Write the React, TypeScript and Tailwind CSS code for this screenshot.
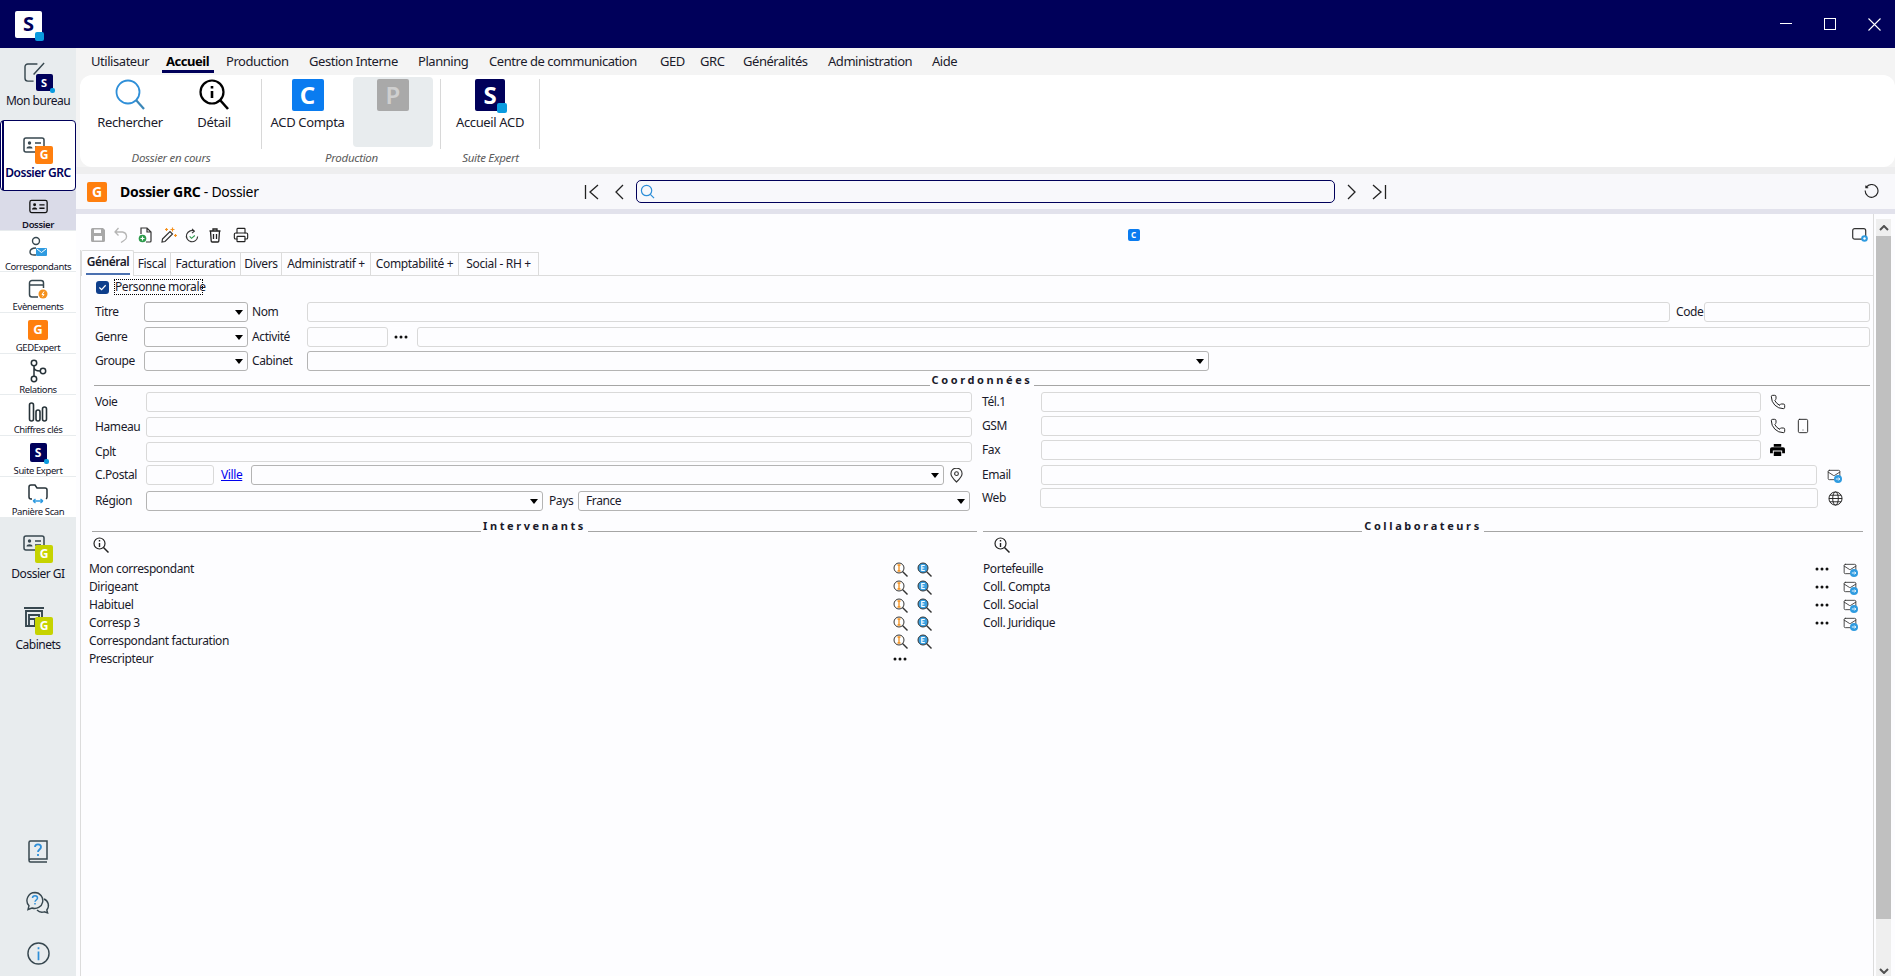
import { Mail, Phone, Printer, Smartphone } from 'lucide-react';
import type { ReactNode } from 'react';

const menuItems = [
  { label: 'Utilisateur', cls: 'w-[75px]' },
  { label: 'Accueil', cls: 'w-[60px] font-bold text-black', active: true },
  { label: 'Production', cls: 'w-[83px]' },
  { label: 'Gestion Interne', cls: 'w-[109px]' },
  { label: 'Planning', cls: 'w-[71px]' },
  { label: 'Centre de communication', cls: 'w-[171px]' },
  { label: 'GED', cls: 'w-[40px]' },
  { label: 'GRC', cls: 'w-[43px]' },
  { label: 'Généralités', cls: 'w-[85px]' },
  { label: 'Administration', cls: 'w-[104px]' },
  { label: 'Aide', cls: 'w-[40px]' },
];

const tabs = [
  { label: 'Fiscal', cls: 'w-[37px]' },
  { label: 'Facturation', cls: 'w-[70px]' },
  { label: 'Divers', cls: 'w-[41px]' },
  { label: 'Administratif +', cls: 'w-[89px]' },
  { label: 'Comptabilité +', cls: 'w-[88px]' },
  { label: 'Social - RH +', cls: 'w-[80px]' },
];

const Badge = ({ letter, cls, dot }: { letter: string; cls: string; dot?: string }) => (
  <div className={`relative flex items-center justify-center rounded-[2px] font-bold leading-none text-white ${cls}`}>
    {letter}
    {dot && <span className={`absolute -bottom-[2px] -right-[2px] rounded-[2px] bg-[#0a9be0] ${dot}`} />}
  </div>
);

const Card = ({ cls = 'w-[22px] h-[16px]', color = '#37474f' }: { cls?: string; color?: string }) => (
  <svg viewBox="0 0 22 16" className={cls} fill="none" stroke={color} strokeWidth="1.5">
    <rect x="1" y="1" width="20" height="14" rx="2" />
    <circle cx="6.5" cy="6" r="1.7" fill={color} stroke="none" />
    <path d="M3.5 11.5c0-3 6-3 6 0z" fill={color} stroke="none" />
    <path d="M12 6h6M12 10h6" />
  </svg>
);

const Overlay = ({ icon, badge, box }: { icon: ReactNode; badge: ReactNode; box: string }) => (
  <div className={`relative ${box}`}>
    {icon}
    <div className="absolute bottom-0 right-0">{badge}</div>
  </div>
);

const SideLarge = ({ label, icon, selected, cls, gap }: { label: string; icon: ReactNode; selected?: boolean; cls: string; gap: string }) => (
  <div
    className={`flex w-[76px] flex-col items-center ${cls} ${
      selected ? 'relative rounded-[4px] border border-[#00005a] bg-white text-[#00005a]' : ''
    }`}
  >
    {selected && <span className="absolute bottom-0 left-[1px] top-0 w-[2px] bg-[#00005a]" />}
    <div className="flex h-[28px] items-start justify-center">{icon}</div>
    <span className={`text-[12px] leading-[16px] tracking-[-0.5px] ${gap} ${selected ? 'font-semibold' : ''}`}>{label}</span>
  </div>
);

const SideSub = ({ label, icon, active }: { label: string; icon: ReactNode; active?: boolean }) => (
  <div
    className={`flex flex-col items-center border-b border-[#e8ecee] ${
      active ? 'h-[40px] bg-[#dadbe8] pt-[4px]' : 'h-[41px] pt-[5px]'
    }`}
  >
    <div className="flex h-[24px] items-center justify-center">{icon}</div>
    <span className={`mt-[1px] text-[9.5px] leading-[11px] tracking-[-0.4px] ${active ? 'font-semibold' : ''}`}>{label}</span>
  </div>
);

const Sidebar = () => (
  <aside className="flex h-full w-[76px] shrink-0 flex-col bg-[#e8ecee] text-[#14142a]">
    <SideLarge
      cls="h-[72px] pt-[15px]"
      gap="mt-[2px]"
      label="Mon bureau"
      icon={
        <Overlay
          box="w-[29px] h-[29px] -mt-[1px]"
          icon={
            <svg viewBox="0 0 24 22" className="h-[21px] w-[23px]" fill="none" stroke="#37474f" strokeWidth="1.5">
              <path d="M14 2H4a3 3 0 0 0-3 3v12a3 3 0 0 0 3 3h6M10 13 21 1" />
            </svg>
          }
          badge={<Badge letter="S" cls="h-[17px] w-[17px] bg-[#00005a] text-[11px]" dot="h-[5px] w-[5px]" />}
        />
      }
    />
    <SideLarge
      selected
      cls="h-[71px] pt-[16px]"
      gap="mt-0"
      label="Dossier GRC"
      icon={
        <Overlay
          box="w-[30px] h-[27px]"
          icon={<Card />}
          badge={<Badge letter="G" cls="h-[18px] w-[18px] bg-[#ff7f0e] text-[12px]" />}
        />
      }
    />
    <div className="bg-white">
      <SideSub active label="Dossier" icon={<Card cls="w-[19px] h-[15px]" color="#111" />} />
      <SideSub
        label="Correspondants"
        icon={
          <svg viewBox="0 0 20 24" className="h-[24px] w-[20px]" fill="none" stroke="#37474f" strokeWidth="1.4">
            <circle cx="8" cy="5" r="3.5" />
            <path d="M8 12c-4 0-6 2-6 4s2 3 4 3h2" />
            <rect x="8" y="12" width="11" height="8" rx="1" fill="#2f9be0" stroke="none" />
            <path d="m9 13 4.5 3.5L18 13" stroke="#fff" strokeWidth="1" />
          </svg>
        }
      />
      <SideSub
        label="Evènements"
        icon={
          <svg viewBox="0 0 20 20" className="h-[20px] w-[20px]" fill="none" stroke="#37474f" strokeWidth="1.5">
            <path d="M10 18H4a2.5 2.5 0 0 1-2.500-2.500V4A2.500 2.500 0 0 1 4 1.500h9A2.500 2.500 0 0 1 15.500 4v5M2 6h13" />
            <circle cx="15" cy="15" r="4.500" fill="#f5911e" stroke="none" />
            <path d="M16 12.500 14 15.500h2l-1.500 2" stroke="#fff" strokeWidth="1" />
          </svg>
        }
      />
      <SideSub label="GEDExpert" icon={<Badge letter="G" cls="h-[20px] w-[20px] bg-[#ff7f0e] text-[13px]" />} />
      <SideSub
        label="Relations"
        icon={
          <svg viewBox="0 0 18 24" className="h-[24px] w-[18px]" fill="none" stroke="#263238" strokeWidth="1.5">
            <circle cx="5" cy="4" r="2.700" />
            <circle cx="5" cy="20" r="2.700" />
            <circle cx="14" cy="12" r="2.700" />
            <path d="M5 7v10M5 8c0 3 3 4 6 4" />
          </svg>
        }
      />
      <SideSub
        label="Chiffres clés"
        icon={
          <svg viewBox="0 0 20 20" className="h-[20px] w-[20px]" fill="none" stroke="#263238" strokeWidth="1.600">
            <rect x="1.500" y="1" width="4" height="18" rx="2" />
            <rect x="8" y="8" width="4" height="11" rx="2" />
            <rect x="14.500" y="5" width="4" height="14" rx="2" />
          </svg>
        }
      />
      <SideSub label="Suite Expert" icon={<Badge letter="S" cls="h-[19px] w-[17px] bg-[#00005a] text-[12px]" dot="h-[5px] w-[5px]" />} />
      <SideSub
        label="Panière Scan"
        icon={
          <svg viewBox="0 0 20 20" className="h-[20px] w-[20px]" fill="none" stroke="#263238" strokeWidth="1.500">
            <path d="M4 15H3a2 2 0 0 1-2-2V3a2 2 0 0 1 2-2h4l2 3h8a2 2 0 0 1 2 2v7a2 2 0 0 1-1 1.800" />
            <path d="M5 17h10M5 17l2.500-2M5 17l2.500 2M15 17l-2.500-2M15 17l-2.500 2" stroke="#2f9be0" strokeWidth="1.300" />
          </svg>
        }
      />
    </div>
    <SideLarge
      cls="h-[71px] pt-[17px]"
      gap="mt-[3px]"
      label="Dossier GI"
      icon={
        <Overlay
          box="w-[30px] h-[28px]"
          icon={<Card />}
          badge={<Badge letter="G" cls="h-[18px] w-[18px] bg-[#c6d300] text-[12px]" />}
        />
      }
    />
    <SideLarge
      cls="h-[71px] pt-[17px]"
      gap="mt-[3px]"
      label="Cabinets"
      icon={
        <Overlay
          box="w-[30px] h-[29px]"
          icon={
            <svg viewBox="0 0 22 22" className="h-[22px] w-[22px]" fill="none" stroke="#37474f" strokeWidth="1.900">
              <path d="M1 2h20M3 5h16v15H3zM6 9h10v4H6zM6 13v7M12 13v7" />
            </svg>
          }
          badge={<Badge letter="G" cls="h-[18px] w-[18px] bg-[#c6d300] text-[12px]" />}
        />
      }
    />
    <div className="flex flex-1 flex-col items-center justify-end gap-[27px] pb-[11px]">
      <svg viewBox="0 0 20 24" className="h-[24px] w-[20px]" fill="none" stroke="#37474f" strokeWidth="1.500">
        <path d="M1 20V2.500A1.500 1.500 0 0 1 2.500 1H19v18H2.500A1.500 1.500 0 0 0 1 20.500 1.500 1.500 0 0 0 2.500 22H19" />
        <path d="M7 7c0-3.500 6-3.500 6 0 0 2.500-3 2.500-3 5M10 14v2" stroke="#2f8fd8" strokeWidth="1.800" />
      </svg>
      <svg viewBox="0 0 24 24" className="h-[24px] w-[24px]" fill="none" stroke="#37474f" strokeWidth="1.400">
        <path d="M9 1.500a8 8 0 0 0-6 13.300L2 18.500l4-1.500a8 8 0 1 0 3-15.500z" />
        <path d="M18 8a7 7 0 0 1 2.800 11l.8 3-3.300-1.200a7 7 0 0 1-7.300-1.800" />
        <path d="M6.500 7c0-3 5-3 5 0 0 2-2.500 2-2.500 3.800M9 12v1.500" stroke="#2f8fd8" strokeWidth="1.500" />
      </svg>
      <svg viewBox="0 0 24 24" className="h-[23px] w-[23px]" fill="none" stroke="#37474f" strokeWidth="1.500">
        <circle cx="12" cy="12" r="11" />
        <path d="M12 10v9M12 5.500v2" stroke="#2f8fd8" strokeWidth="1.800" />
      </svg>
    </div>
  </aside>
);

const BigSearch = ({ info }: { info?: boolean }) =>
  info ? (
    <svg viewBox="0 0 30 32" className="h-[32px] w-[30px]" fill="none" stroke="#000" strokeWidth="2.200">
      <circle cx="13" cy="13" r="11.500" />
      <path d="m21 21 8 9" strokeWidth="2.600" />
      <path d="M13 12v7M13 7v2.500" strokeWidth="2.600" />
    </svg>
  ) : (
    <svg viewBox="0 0 30 32" className="h-[32px] w-[30px]" fill="none" stroke="#2f8fd8" strokeWidth="1.800">
      <circle cx="13" cy="13" r="11.500" />
      <path d="m21 21 8 9" stroke="#3a86b8" strokeWidth="2.200" />
    </svg>
  );

const RibbonItem = ({ label, icon, cls }: { label?: string; icon: ReactNode; cls: string }) => (
  <div className={`flex flex-col items-center ${cls}`}>
    <div className="flex h-[32px] items-center justify-center">{icon}</div>
    {label && <span className="mt-[3px] whitespace-nowrap text-[13px] leading-[16px] tracking-[-0.35px]">{label}</span>}
  </div>
);

const RibbonGroup = ({ label, cls, children }: { label: string; cls: string; children: ReactNode }) => (
  <div className={`flex flex-col ${cls}`}>
    <div className="mt-[4px] flex h-[70px] border-r border-[#d8d8d8]">{children}</div>
    <span className="text-center text-[11.5px] italic leading-[17px] tracking-[-0.3px] text-[#5c5c5c]">{label}</span>
  </div>
);

const Ribbon = () => (
  <div className="flex h-[92px] rounded-[12px] bg-white text-[#1b1b2b]">
    <RibbonGroup label="Dossier en cours" cls="w-[182px]">
      <RibbonItem label="Rechercher" cls="w-[100px]" icon={<BigSearch />} />
      <RibbonItem label="Détail" cls="w-[68px]" icon={<BigSearch info />} />
    </RibbonGroup>
    <RibbonGroup label="Production" cls="w-[179px]">
      <RibbonItem label="ACD Compta" cls="w-[91px]" icon={<Badge letter="C" cls="h-[32px] w-[32px] bg-[#0a7cf0] text-[24px]" />} />
      <div className="-mt-[2px] flex h-[70px] w-[80px] justify-center rounded-[4px] bg-[#e8ecee] pt-[2px]">
        <Badge letter="P" cls="h-[32px] w-[32px] bg-[#a9a9a9] text-[24px] font-semibold !text-[#cfcfcf]" />
      </div>
    </RibbonGroup>
    <RibbonGroup label="Suite Expert" cls="w-[99px]">
      <RibbonItem
        label="Accueil ACD"
        cls="w-[98px]"
        icon={<Badge letter="S" cls="h-[32px] w-[30px] bg-[#00005a] text-[24px]" dot="h-[10px] w-[10px]" />}
      />
    </RibbonGroup>
  </div>
);

const NavBars = ({ dir }: { dir: 'first' | 'prev' | 'next' | 'last' }) => {
  const d = {
    first: 'M1.500 2v14M14 2 6 9l8 7',
    prev: 'M10 2 3 9l7 7',
    next: 'M3 2l7 7-7 7',
    last: 'M2 2l8 7-8 7M14.500 2v14',
  }[dir];
  return (
    <svg viewBox="0 0 16 18" className="h-[18px] w-[16px]" fill="none" stroke="#222" strokeWidth="1.300">
      <path d={d} />
    </svg>
  );
};

const Header = () => (
  <div className="flex h-[35px] items-center bg-[#f8f8fb] pl-[11px]">
    <Badge letter="G" cls="h-[20px] w-[20px] bg-[#ff7f0e] text-[14px]" />
    <span className="ml-[13px] w-[464px] whitespace-nowrap text-[14px] tracking-[-0.3px] text-black">
      <b>Dossier GRC</b> - Dossier
    </span>
    <NavBars dir="first" />
    <div className="ml-[13px]">
      <NavBars dir="prev" />
    </div>
    <div className="ml-[7px] flex h-[23px] w-[699px] items-center rounded-[5px] border border-[#00005a] pl-[3px]">
      <svg viewBox="0 0 16 16" className="h-[15px] w-[15px]" fill="none" stroke="#2f8fd8" strokeWidth="1.300">
        <circle cx="7" cy="7" r="5.500" />
        <path d="m11 11 4 4" />
      </svg>
    </div>
    <div className="ml-[10px]">
      <NavBars dir="next" />
    </div>
    <div className="ml-[10px]">
      <NavBars dir="last" />
    </div>
    <svg viewBox="0 0 16 16" className="ml-[477px] h-[15px] w-[15px]" fill="none" stroke="#222" strokeWidth="1.200">
      <path d="M2.500 3.500A6.800 6.800 0 1 1 1.300 7M2 1.500v2.500h2.500" />
    </svg>
  </div>
);

const Toolbar = () => (
  <div className="flex h-[36px] items-center pl-[14px] pt-[6px]">
    {[
      <svg key="s" viewBox="0 0 16 16" className="h-[16px] w-[16px]" fill="#a8a8a8">
        <path d="M1 2.500A1.500 1.500 0 0 1 2.500 1H13l2 2v10.500a1.500 1.500 0 0 1-1.500 1.500h-11A1.500 1.500 0 0 1 1 13.500zM4 2.500V6h7V2.500zM4 9v4.500h8V9z" fillRule="evenodd" />
      </svg>,
      <svg key="u" viewBox="0 0 14 16" className="h-[16px] w-[14px]" fill="none" stroke="#b5b5b5" strokeWidth="1.300">
        <path d="M4.500 1 1 5l3.500 3.500M1 5h7.500a4.500 4.500 0 0 1 1.500 8.500L7 15.500" />
      </svg>,
      <svg key="n" viewBox="0 0 14 16" className="h-[16px] w-[14px]" fill="none" stroke="#333" strokeWidth="1.200">
        <path d="M3 7V1h6l4 4v9a1 1 0 0 1-1 1H8M9 1v4h4" />
        <circle cx="4.500" cy="11.500" r="3.800" fill="#2c9a4b" stroke="none" />
        <path d="M2.500 11.500h4M4.500 9.500v4" stroke="#fff" />
      </svg>,
      <svg key="w" viewBox="0 0 16 16" className="h-[16px] w-[16px]" fill="none" stroke="#333" strokeWidth="1.200">
        <path d="m1.500 12 7.500-7.500 2.500 2.500L4 14.500l-3 .5z" />
        <path d="M4 2.500h3M5.500 1v3M13 8.500h3M14.500 7v3M11.500 .5v4M9.500 2.500h4" stroke="#f5911e" />
      </svg>,
      <svg key="r" viewBox="0 0 14 16" className="h-[15px] w-[14px]" fill="none" stroke="#333" strokeWidth="1.200">
        <path d="M10 3.500A6 6 0 1 0 13 9M7 1l2.500 2.500L7 5.500" />
        <path d="m4.500 9 2 2L10 8" stroke="#2c9a4b" />
      </svg>,
      <svg key="t" viewBox="0 0 12 15" className="h-[15px] w-[12px]" fill="none" stroke="#222" strokeWidth="1.300">
        <path d="M0.500 3h11M4 3V1h4v2M1.500 3l.7 10a1 1 0 0 0 1 1h5.600a1 1 0 0 0 1-1l.7-10M4.500 6v5M7.500 6v5" />
      </svg>,
      <Printer key="p" size={16} color="#222" strokeWidth={1.700} />,
    ].map((icon, i) => (
      <div key={i} className="flex h-[16px] w-[23.8px] items-center">
        {icon}
      </div>
    ))}
    <div className="ml-[871px]">
      <Badge letter="C" cls="h-[12px] w-[12px] bg-[#0a7cf0] text-[8px]" />
    </div>
    <div className="flex-1" />
    <svg viewBox="0 0 16 14" className="mr-[5px] h-[14px] w-[16px]" fill="none" stroke="#333" strokeWidth="1.200">
      <rect x="0.700" y="0.700" width="13" height="10.500" rx="2" />
      <circle cx="12.500" cy="10.500" r="3.300" fill="#2f9be0" stroke="none" />
      <circle cx="12.500" cy="10.500" r="1.200" fill="#fff" stroke="none" />
    </svg>
  </div>
);

const Tabs = () => (
  <div className="flex h-[26px] items-end border-b border-[#dcdcdc]">
    <div className="relative -mb-px flex h-[26px] w-[53px] items-start justify-center rounded-t-[2px] border border-b-0 border-[#dcdcdc] bg-[#fdfdff] pl-[1px] pt-[3px] text-[12px] font-semibold leading-[16px] tracking-[-0.5px]">
      Général
      <span className="absolute bottom-[1px] left-[4px] right-[3px] h-[2px] bg-[#4a70b0]" />
    </div>
    {tabs.map(tab => (
      <div
        key={tab.label}
        className={`flex h-[23px] items-center justify-center whitespace-nowrap border-r border-t border-[#dcdcdc] text-[12px] tracking-[-0.35px] ${tab.cls}`}
      >
        {tab.label}
      </div>
    ))}
  </div>
);

const Label = ({ children, cls }: { children: ReactNode; cls: string }) => (
  <span className={`shrink-0 whitespace-nowrap ${cls}`}>{children}</span>
);

const Field = ({ cls }: { cls: string }) => (
  <input readOnly className={`h-[20px] shrink-0 rounded-[3px] border border-[#d9d9d9] bg-[#fdfdff] outline-none ${cls}`} />
);

const Caret = () => <span className="h-0 w-0 border-x-[4px] border-t-[5px] border-x-transparent border-t-black" />;

const Select = ({ cls, value }: { cls: string; value?: string }) => (
  <div className={`flex h-[20px] shrink-0 items-center justify-between rounded-[3px] border border-[#b4b4b4] pl-[7px] pr-[4px] ${cls}`}>
    <span>{value}</span>
    <Caret />
  </div>
);

const Dots = () => (
  <svg viewBox="0 0 14 4" className="h-[4px] w-[14px]" fill="#111">
    <circle cx="2" cy="2" r="1.500" />
    <circle cx="7" cy="2" r="1.500" />
    <circle cx="12" cy="2" r="1.500" />
  </svg>
);

const Section = ({ title, cls }: { title: string; cls: string }) => (
  <div className={`flex h-[14px] items-end gap-[2px] ${cls}`}>
    <span className="mb-0 h-[1px] flex-1 bg-[#a5a5a5]" />
    <span className="-mb-[1px] whitespace-nowrap text-[11px] font-bold leading-[14px] tracking-[2.6px]">{title}</span>
    <span className="h-[1px] flex-1 bg-[#a5a5a5]" />
  </div>
);

const SmallLens = () => (
  <svg viewBox="0 0 16 16" className="h-[16px] w-[16px]" fill="none" stroke="#222" strokeWidth="1.200">
    <circle cx="6.500" cy="6.500" r="5.500" />
    <path d="m10.500 10.500 5 5" strokeWidth="1.500" />
    <path d="M6.500 6v4M6.500 3v1.500" strokeWidth="1.400" />
  </svg>
);

const LetterLens = ({ kind }: { kind: 'I' | 'E' }) => (
  <svg viewBox="0 0 15 15" className="h-[15px] w-[15px]" fill="none" stroke="#333" strokeWidth="1">
    <circle cx="6" cy="6" r="5" fill={kind === 'E' ? '#3a9fe0' : '#fff'} />
    <path d="m9.500 9.500 5 5" strokeWidth="1.400" />
    {kind === 'I' ? (
      <path d="M6 3v6M4.500 3h3M4.500 9h3" stroke="#f5911e" strokeWidth="1.300" />
    ) : (
      <path d="M7.800 3.500H4.800v5h3M4.800 6h2.500" stroke="#fff" strokeWidth="1.200" />
    )}
  </svg>
);

const MailPlus = () => (
  <div className="relative h-[14px] w-[15px]">
    <Mail size={14} color="#333" strokeWidth={1.500} />
    <svg viewBox="0 0 8 8" className="absolute bottom-[-1px] right-0 h-[8px] w-[8px]">
      <circle cx="4" cy="4" r="4" fill="#2f9be0" />
      <path d="M1.800 4h4M4.300 2.500 5.800 4 4.300 5.500" stroke="#fff" strokeWidth="0.900" fill="none" />
    </svg>
  </div>
);

const Handset = () => <Phone size={16} color="#222" strokeWidth={1.500} />;

const Form = () => (
  <div className="pl-[14px] text-[12px] leading-[16px] tracking-[-0.4px] text-[#1a1a2a]">
    <div className="mt-[3px] flex h-[16px] items-center">
      <div className="ml-[1px] flex h-[13px] w-[13px] items-center justify-center rounded-[3px] bg-[#0f3f8c]">
        <svg viewBox="0 0 10 10" className="h-[9px] w-[9px]" fill="none" stroke="#fff" strokeWidth="1.300">
          <path d="m1.500 5 2.500 2.500 4.500-5" />
        </svg>
      </div>
      <span className="ml-[5px] w-[89px] whitespace-nowrap border border-dotted border-black text-center leading-[14px]">Personne morale</span>
    </div>

    <div className="mt-[7px] flex items-center">
      <Label cls="w-[49px]">Titre</Label>
      <Select cls="w-[104px]" />
      <Label cls="ml-[4px] w-[55px]">Nom</Label>
      <Field cls="w-[1363px]" />
      <Label cls="ml-[6px] w-[28px]">Code</Label>
      <Field cls="w-[166px]" />
    </div>
    <div className="mt-[5px] flex items-center">
      <Label cls="w-[49px]">Genre</Label>
      <Select cls="w-[104px]" />
      <Label cls="ml-[4px] w-[55px]">Activité</Label>
      <Field cls="w-[81px]" />
      <div className="flex w-[29px] justify-center pr-[3px]">
        <Dots />
      </div>
      <Field cls="w-[1453px]" />
    </div>
    <div className="mt-[4px] flex items-center">
      <Label cls="w-[49px]">Groupe</Label>
      <Select cls="w-[104px]" />
      <Label cls="ml-[4px] w-[55px]">Cabinet</Label>
      <Select cls="w-[902px]" />
    </div>

    <Section title="Coordonnées" cls="ml-[-1px] mt-[1px] w-[1776px]" />

    <div className="mt-[6px] flex">
      <div className="w-[877px]">
        <div className="flex items-center">
          <Label cls="w-[51px]">Voie</Label>
          <Field cls="w-[826px]" />
        </div>
        <div className="mt-[5px] flex items-center">
          <Label cls="w-[51px]">Hameau</Label>
          <Field cls="w-[826px]" />
        </div>
        <div className="mt-[5px] flex items-center">
          <Label cls="w-[51px]">Cplt</Label>
          <Field cls="w-[826px]" />
        </div>
        <div className="mt-[3px] flex items-center">
          <Label cls="w-[51px]">C.Postal</Label>
          <Field cls="w-[68px]" />
          <a className="ml-[7px] w-[30px] text-[#0000ee] underline">Ville</a>
          <Select cls="w-[693px]" />
          <svg viewBox="0 0 14 16" className="ml-[6px] h-[15px] w-[13px]" fill="none" stroke="#333" strokeWidth="1.200">
            <path d="M7 15C3 11 1 8.500 1 6a6 6 0 0 1 12 0c0 2.500-2 5-6 9z" />
            <circle cx="7" cy="6" r="2" />
          </svg>
        </div>
        <div className="mt-[6px] flex items-center">
          <Label cls="w-[51px]">Région</Label>
          <Select cls="w-[397px]" />
          <Label cls="ml-[6px] w-[29px]">Pays</Label>
          <Select cls="w-[392px]" value="France" />
        </div>
      </div>
      <div className="ml-[10px]">
        <div className="flex items-center">
          <Label cls="w-[59px]">Tél.1</Label>
          <Field cls="w-[720px]" />
          <div className="ml-[9px]">
            <Handset />
          </div>
        </div>
        <div className="mt-[4px] flex items-center">
          <Label cls="w-[59px]">GSM</Label>
          <Field cls="w-[720px]" />
          <div className="ml-[9px]">
            <Handset />
          </div>
          <Smartphone size={16} color="#222" strokeWidth={1.400} className="ml-[9px]" />
        </div>
        <div className="mt-[4px] flex items-center">
          <Label cls="w-[59px]">Fax</Label>
          <Field cls="w-[720px]" />
          <svg viewBox="0 0 16 15" className="ml-[9px] h-[14px] w-[15px]" fill="#000">
            <path d="M4 1h8v3H4zM2 4.500h12a2 2 0 0 1 2 2V11h-3V8H3v3H0V6.500a2 2 0 0 1 2-2zM4 9h8v5H4z" />
          </svg>
        </div>
        <div className="mt-[5px] flex items-center">
          <Label cls="w-[59px]">Email</Label>
          <Field cls="w-[776px]" />
          <div className="ml-[10px]">
            <MailPlus />
          </div>
        </div>
        <div className="mt-[3px] flex items-center">
          <Label cls="w-[58px]">Web</Label>
          <Field cls="w-[778px]" />
          <svg viewBox="0 0 16 16" className="ml-[10px] h-[15px] w-[15px]" fill="none" stroke="#222" strokeWidth="1">
            <circle cx="8" cy="8" r="7" />
            <ellipse cx="8" cy="8" rx="3" ry="7" />
            <path d="M1 8h14M2 4.500h12M2 11.500h12" />
          </svg>
        </div>
      </div>
    </div>

    <div className="mt-[7px] flex">
      <div className="-ml-[3px] w-[885px]">
        <Section title="Intervenants" cls="" />
        <div className="ml-[1px] mt-[3px] flex h-[20px] items-center">
          <SmallLens />
        </div>
        <div className="-ml-[3px] mt-[5px] flex flex-col">
          {['Mon correspondant', 'Dirigeant', 'Habituel', 'Corresp 3', 'Correspondant facturation'].map(name => (
            <div key={name} className="flex h-[18px] items-center">
              <span className="w-[804px]">{name}</span>
              <LetterLens kind="I" />
              <div className="ml-[9px]">
                <LetterLens kind="E" />
              </div>
            </div>
          ))}
          <div className="flex h-[18px] items-center">
            <span className="w-[804px]">Prescripteur</span>
            <Dots />
          </div>
        </div>
      </div>
      <div className="ml-[6px] w-[880px]">
        <Section title="Collaborateurs" cls="" />
        <div className="ml-[11px] mt-[3px] flex h-[20px] items-center">
          <SmallLens />
        </div>
        <div className="mt-[5px] flex flex-col">
          {['Portefeuille', 'Coll. Compta', 'Coll. Social', 'Coll. Juridique'].map(name => (
            <div key={name} className="flex h-[18px] items-center">
              <span className="w-[832px]">{name}</span>
              <Dots />
              <div className="ml-[14px]">
                <MailPlus />
              </div>
            </div>
          ))}
        </div>
      </div>
    </div>
  </div>
);

const Scrollbar = () => (
  <div className="ml-[2px] mt-[5px] flex w-[15px] flex-col bg-[#efefef]">
    <div className="flex h-[17px] items-center justify-center">
      <svg viewBox="0 0 10 6" className="h-[6px] w-[10px]" fill="none" stroke="#505050" strokeWidth="2">
        <path d="m1 5 4-4 4 4" />
      </svg>
    </div>
    <div className="h-[683px] bg-[#c0c0c0]" />
    <div className="flex flex-1 items-end justify-center pb-[2px]">
      <svg viewBox="0 0 10 6" className="h-[6px] w-[10px]" fill="none" stroke="#505050" strokeWidth="2">
        <path d="m1 1 4 4 4-4" />
      </svg>
    </div>
  </div>
);

const WindowButtons = () => (
  <div className="flex items-center gap-[32px]">
    <svg viewBox="0 0 12 12" className="h-[12px] w-[12px]" stroke="#fff" strokeWidth="1">
      <path d="M0 5.500h12" />
    </svg>
    <svg viewBox="0 0 12 12" className="h-[12px] w-[12px]" fill="none" stroke="#fff" strokeWidth="1">
      <rect x="0.500" y="0.500" width="11" height="11" />
    </svg>
    <svg viewBox="0 0 13 13" className="h-[13px] w-[13px]" stroke="#fff" strokeWidth="1.100">
      <path d="m0.500 0.500 12 12M12.500 0.500l-12 12" />
    </svg>
  </div>
);

export default function App() {
  return (
    <div className="flex h-[976px] w-[1895px] flex-col overflow-hidden bg-[#f4f4f4] font-['Noto_Sans','Open_Sans',sans-serif]">
      <div className="flex h-[48px] shrink-0 items-center justify-between bg-[#00005a] pl-[15px] pr-[14px]">
        <div className="relative flex h-[27px] w-[27px] items-center justify-center rounded-[2px] bg-white text-[20px] font-bold leading-none text-[#00005a]">
          S
          <span className="absolute -bottom-[3px] -right-[2px] h-[9px] w-[9px] rounded-[2px] bg-[#0a9be0]" />
        </div>
        <WindowButtons />
      </div>
      <div className="flex min-h-0 flex-1">
        <Sidebar />
        <div className="flex min-w-0 flex-1 flex-col">
          <div className="flex h-[27px] items-center pl-[15px] text-[13px] tracking-[-0.45px] text-[#1b1b2b]">
            {menuItems.map(item => (
              <div key={item.label} className={`relative whitespace-nowrap ${item.cls}`}>
                {item.label}
                {item.active && <span className="absolute -bottom-[2px] -left-[4px] h-[3px] w-[52px] bg-[#00005a]" />}
              </div>
            ))}
          </div>
          <div className="ml-[4px]">
            <Ribbon />
          </div>
          <div className="h-[7px] bg-[#eeeeef]" />
          <Header />
          <div className="h-[5px] bg-[#e2e2ec]" />
          <div className="flex min-h-0 flex-1 bg-[#fdfdff] text-[#1a1a2a]">
            <div className="flex w-[1798px] flex-col border-r border-[#dcdcdc] bg-[#fdfdff]">
              <Toolbar />
              <div className="ml-[4px] flex flex-1 flex-col border-l border-[#dcdcdc]">
                <Tabs />
                <Form />
              </div>
            </div>
            <Scrollbar />
          </div>
        </div>
      </div>
    </div>
  );
}
